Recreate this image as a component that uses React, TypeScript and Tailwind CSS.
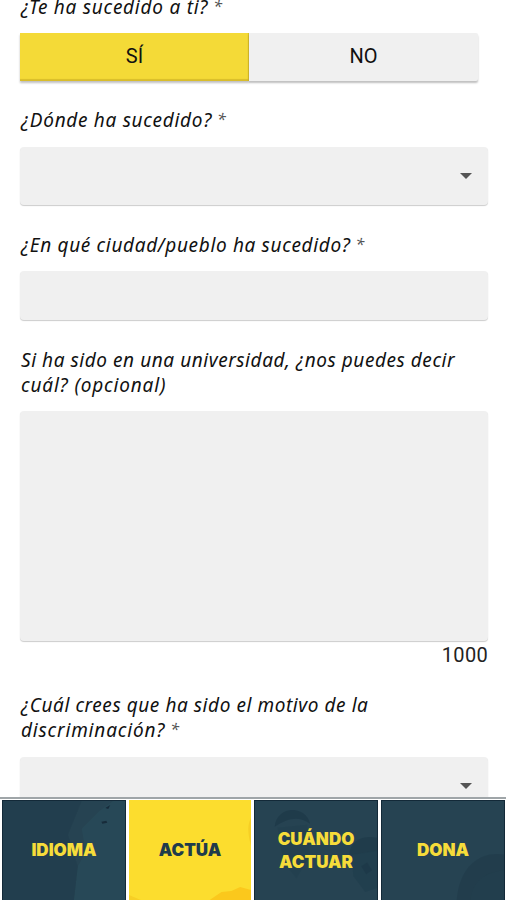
import clsx from "clsx";
import { useState } from "react";

interface LabelProps {
  lines: string[];
  required?: boolean;
  className?: string;
}

// Question label, one entry per line
const Label: React.FC<LabelProps> = ({ lines, required, className }) => (
  <div
    className={clsx(
      "pl-px font-['Noto_Sans','Open_Sans',sans-serif] text-[19px] leading-[25px] text-[#111111] italic whitespace-nowrap",
      className
    )}
  >
    {lines.map((line, i) => (
      <div key={line} className={i > 0 ? "tracking-[0.83px]" : undefined}>
        {line}
        {required && i === lines.length - 1 && (
          <span className="relative -top-[2px] text-[16px] leading-none text-[#555555]"> *</span>
        )}
      </div>
    ))}
  </div>
);

const Arrow = () => (
  <svg className="h-[6px] w-[12px]" viewBox="0 0 12 6">
    <path d="M0 0h12L6 6z" fill="#555555" />
  </svg>
);

const field =
  "block w-[468px] rounded-[4px] bg-[#f0f0f0] shadow-[0_1px_1px_rgba(0,0,0,0.2)]";

const navItems = [
  {
    id: "idioma",
    lines: ["IDIOMA"],
    art: (
      <>
        <path d="M124 0v100H72l4-34 8-14-4-24 18-18 14-10z" fill="#2b4f5d" opacity=".45" />
        <path d="M0 0h80L66 34l10 32-4 34H0z" fill="#1f3949" opacity=".45" />
        <path d="M100 21l5-1 1 2-5 1zM104 7l5-3-2 4z" fill="#172b3a" />
      </>
    ),
  },
  {
    id: "actua",
    lines: ["ACTÚA"],
    art: (
      <>
        <path d="M82 100l12-8 10-1 9-4 11 3v10z" fill="#fbc81c" />
        <path d="M124 18c-5 8-2 20 0 28z" fill="#f6cf25" />
        <path d="M0 100v-5l12 5z" fill="#f7cf25" />
      </>
    ),
  },
  {
    id: "cuando",
    lines: ["CUÁNDO", "ACTUAR"],
    art: (
      <>
        <path d="M20 26c2-22 32-22 36-3-12-9-24-5-36 3z" fill="#1c3847" opacity=".7" />
        <path d="M23 27l30-3 3 32-14 22-13-16z" fill="#223f4e" opacity=".6" />
        <path d="M96 54c0-14 14-20 28-17v14l-26 4z" fill="#1d3847" opacity=".6" />
        <path d="M98 54l26-4v38l-12 4-12-16z" fill="#213e4d" opacity=".8" />
        <path d="M108 66l6-4 5 8-6 4z" fill="#1d3847" opacity=".7" />
      </>
    ),
  },
  {
    id: "dona",
    lines: ["DONA"],
    art: (
      <>
        <path d="M76 100c2-30 20-50 48-46v46z" fill="#1f3b4a" opacity=".6" />
        <path d="M90 100c2-20 16-28 34-30v30z" fill="#223f4e" opacity=".5" />
      </>
    ),
  },
];

const App: React.FC = () => {
  const [answer, setAnswer] = useState("SÍ");
  const [active, setActive] = useState("actua");

  return (
    <div className="flex h-[900px] w-[506px] flex-col overflow-hidden bg-white">
      <main className="h-[797px] shrink-0 overflow-hidden pl-[20px]">
        <Label lines={["¿Te ha sucedido a ti?"]} required className="-mt-[5px] tracking-[0.75px]" />

        <div className="mt-[13px] flex h-[48px] w-[458px] font-[Roboto,sans-serif] text-[20px]">
          {["SÍ", "NO"].map((option) => (
            <button
              key={option}
              type="button"
              onClick={() => setAnswer(option)}
              className={clsx(
                "flex-1 pb-[2px] text-[#111111]",
                answer === option
                  ? "bg-[#f4da37] shadow-[inset_-1px_-2px_1px_#d9bd2b,0_2px_2px_rgba(0,0,0,0.25)]"
                  : "rounded-r-[2px] bg-[#f0f0f0] shadow-[0_2px_2px_rgba(0,0,0,0.25)]"
              )}
            >
              {option}
            </button>
          ))}
        </div>

        <Label lines={["¿Dónde ha sucedido?"]} required className="mt-[27px] tracking-[0.7px]" />
        <button type="button" className={clsx(field, "mt-[14px] h-[58px]")}>
          <span className="flex justify-end pr-[16px]">
            <Arrow />
          </span>
        </button>

        <Label
          lines={["¿En qué ciudad/pueblo ha sucedido?"]}
          required
          className="mt-[28px] tracking-[0.66px]"
        />
        <input className={clsx(field, "mt-[13px] h-[49px] px-3")} />

        <Label
          lines={["Si ha sido en una universidad, ¿nos puedes decir", "cuál? (opcional)"]}
          className="mt-[28px] tracking-[0.56px]"
        />
        <textarea className={clsx(field, "mt-[13px] h-[230px] resize-none p-3")} />
        <div className="mt-[2px] w-[468px] text-right font-[Roboto,sans-serif] text-[20px] leading-[24px] tracking-[0.3px] text-[#222222]">
          1000
        </div>

        <Label
          lines={["¿Cuál crees que ha sido el motivo de la", "discriminación?"]}
          required
          className="mt-[26px] tracking-[0.57px]"
        />
        <button type="button" className={clsx(field, "mt-[14px] h-[58px]")}>
          <span className="flex justify-end pr-[16px]">
            <Arrow />
          </span>
        </button>
      </main>

      <nav className="flex h-[103px] shrink-0 gap-[3px] border-t-2 border-[#9fa5a8] bg-white pt-px pr-px pl-[2px] font-[Inter,sans-serif]">
        {navItems.map((item) => (
          <button
            key={item.id}
            type="button"
            onClick={() => setActive(item.id)}
            className={clsx(
              "relative flex flex-1 flex-col items-center justify-center text-[17px] leading-[23px] font-black",
              active === item.id
                ? "bg-[#fcdd2e] text-[#203b4b]"
                : "border-x border-t border-[#132938] bg-[#264352] text-[#f6dc3a]"
            )}
          >
            <svg
              className="absolute inset-0 h-full w-full"
              viewBox="0 0 124 100"
              preserveAspectRatio="none"
            >
              {item.art}
            </svg>
            {item.lines.map((line) => (
              <span key={line} className="relative">
                {line}
              </span>
            ))}
          </button>
        ))}
      </nav>
    </div>
  );
};

export default App;
